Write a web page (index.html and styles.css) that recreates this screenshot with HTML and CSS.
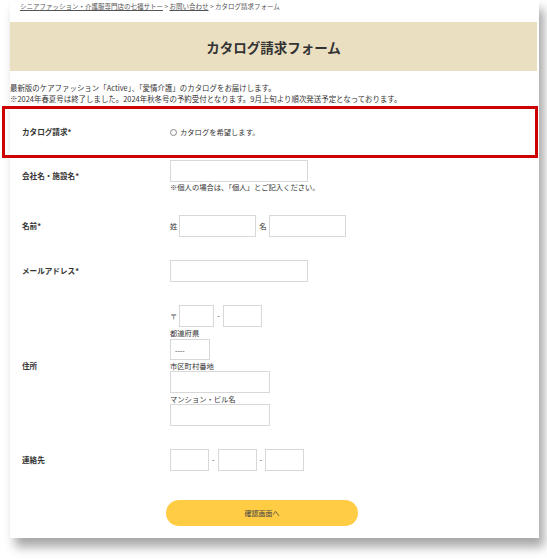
FILE: index.html
```html
<!DOCTYPE html>
<html lang="ja">
<head>
  <meta charset="UTF-8" />
  <meta name="viewport" content="width=device-width, initial-scale=1.0"/>
  <title>カタログ請求フォーム</title>
  <link rel="stylesheet" href="styles.css">
</head>
<body>
  <div class="page">
    <div class="crumbs">
      <a href="#">シニアファッション・介護服専門店の七福サトー</a> &gt; <a href="#">お問い合わせ</a> &gt; カタログ請求フォーム
    </div>
    <h1 class="title">カタログ請求フォーム</h1>
    <div class="intro">
      <p>最新版のケアファッション「Active」、「愛情介護」のカタログをお届けします。</p>
      <p>※2024年春夏号は終了しました。2024年秋冬号の予約受付となります。9月上旬より順次発送予定となっております。</p>
    </div>

    <form class="form">
      <div class="row marked">
        <div class="label">カタログ請求*</div>
        <div class="field">
          <label class="radio"><input type="radio" name="catalog"> カタログを希望します。</label>
        </div>
      </div>

      <div class="row">
        <div class="label">会社名・施設名*</div>
        <div class="field">
          <input type="text" class="box wide">
          <div class="note">※個人の場合は、「個人」とご記入ください。</div>
        </div>
      </div>

      <div class="row">
        <div class="label">名前*</div>
        <div class="field line">
          <span class="pre">姓</span><input type="text" class="box name">
          <span class="pre mid">名</span><input type="text" class="box name">
        </div>
      </div>

      <div class="row">
        <div class="label">メールアドレス*</div>
        <div class="field">
          <input type="text" class="box wide">
        </div>
      </div>

      <div class="row">
        <div class="label">住所</div>
        <div class="field">
          <div class="line">
            <span class="pre zip">〒</span><input type="text" class="box zip1">
            <span class="dash">-</span><input type="text" class="box zip2">
          </div>
          <div class="sub">都道府県</div>
          <select class="box pref"><option>----</option></select>
          <div class="sub">市区町村番地</div>
          <input type="text" class="box addr">
          <div class="sub">マンション・ビル名</div>
          <input type="text" class="box addr">
        </div>
      </div>

      <div class="row">
        <div class="label">連絡先</div>
        <div class="field line">
          <input type="text" class="box tel">
          <span class="dash">-</span><input type="text" class="box tel">
          <span class="dash">-</span><input type="text" class="box tel">
        </div>
      </div>

      <button type="button" class="submit">確認画面へ</button>
    </form>
  </div>
</body>
</html>
```

FILE: styles.css
```css
html, body { height: 560px; }
body {
  margin: 0;
  background: #fff;
  font-family: "Noto Sans CJK JP", "Noto Sans", sans-serif;
  color: #333;
  overflow: hidden;
}
p { margin: 0; }
.page {
  width: 529px;
  height: 538px;
  margin-left: 10px;
  background: #fff;
  box-shadow: 5px 9px 10px rgba(0,0,0,0.35);
}
.crumbs {
  height: 20px;
  padding: 2px 0 0 10px;
  font-size: 6.5px;
  line-height: 8px;
  color: #555;
}
.crumbs a { color: #555; }
.title {
  margin: 0 2px 0 0;
  height: 49px;
  display: flex;
  align-items: center;
  justify-content: center;
  background: #ebdfc1;
  font-size: 13.5px;
  font-weight: bold;
  color: #333;
}
.intro {
  margin-top: 10.5px;
  font-size: 7.45px;
  line-height: 11px;
}
.form {
  margin-top: 12px;
}
.row {
  display: grid;
  grid-template-columns: 148px 1fr;
  align-items: center;
  padding: 11.5px 0 11.5px 12px;
  font-size: 7.3px;
  line-height: 10.4px;
}
.marked { position: relative; }
.marked::after {
  content: "";
  position: absolute;
  left: -8px; right: 1px; top: -9.5px; bottom: -9.5px;
  border: 3px solid #cc0000;
}
.label {
  font-weight: bold;
  font-size: 7.6px;
}
.radio {
  display: flex;
  align-items: center;
}
.radio input {
  appearance: none;
  width: 7px;
  height: 7px;
  margin: 0 3px 0 0;
  border: 1px solid #888;
  border-radius: 50%;
}
.box {
  display: block;
  box-sizing: border-box;
  height: 22px;
  margin: 0;
  border: 1px solid #d8d8d8;
  background: #fff;
  font-family: inherit;
}
.wide { width: 138px; }
.name { width: 77px; }
.zip1 { width: 35px; }
.zip2 { width: 39px; }
.addr { width: 100px; }
.tel { width: 39px; }
.pref {
  width: 40px;
  height: 21px;
  margin-top: 1px;
  padding: 0 4px;
  appearance: none;
  border-radius: 0;
  font-size: 7px;
  color: #333;
}
.line {
  display: flex;
  align-items: center;
}
.pre { margin-right: 2px; }
.pre.mid { margin-left: 3px; }
.zip { color: #555; }
.dash { margin: 0 3px; }
.note, .sub { line-height: 10px; }
.sub { margin-top: 1px; }
.submit {
  display: block;
  margin: 17px 0 0 156px;
  width: 192px;
  height: 26px;
  border: none;
  border-radius: 13px;
  background: #ffcc44;
  color: #444;
  font-family: inherit;
  font-size: 7px;
}
```
